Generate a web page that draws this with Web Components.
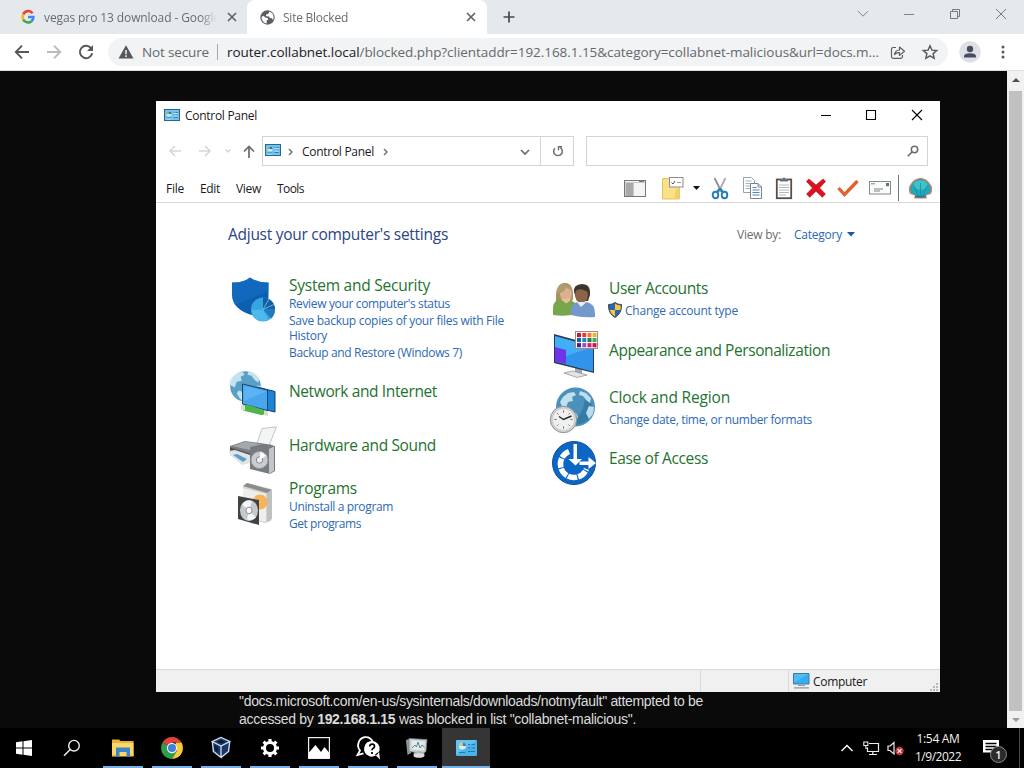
<!DOCTYPE html>
<html lang="en">
<head>
<meta charset="utf-8">
<title>Site Blocked</title>
<style>
    html, body {
        margin: 0;
        width: 1024px;
        height: 768px;
        overflow: hidden;
        background: #0a0a0a;
        font-family: "Open Sans", "Noto Sans", sans-serif;
    }

    body {
        display: flex;
        flex-direction: column;
    }
</style>
</head>
<body>
<browser-tabs>
    <browser-tab icon="google" style="width:247px"><ui-text width="176">vegas pro 13 download - Google</ui-text></browser-tab>
    <browser-tab icon="globe" active style="width:240px"><ui-text width="65">Site Blocked</ui-text></browser-tab>
</browser-tabs>
<browser-toolbar></browser-toolbar>
<browser-page>
    <p><ui-text width="464">"docs.microsoft.com/en-us/sysinternals/downloads/notmyfault" attempted to be</ui-text></p>
    <p><ui-text width="397">accessed by <b>192.168.1.15</b> was blocked in list "collabnet-malicious".</ui-text></p>
</browser-page>
<task-bar></task-bar>
<control-panel></control-panel>

<script>
const globeLand = `<path d="M7 11l5-4 6-1 2 3-4 2 1 4-5 1-2 6-4-2-2-4zM24 5l6 2 5 5-1 5-4-3-3-4-4-1zM14 25l6 2 2 4-3 6-4-4-3-5zM33 20l5 1-1 7-4 5-3-6z" fill="#d5edf6" opacity=".85"/>`

const cplArt = `<rect x=".5" y=".5" width="15" height="11" fill="#74c3ec" stroke="#256792"/><circle cx="5" cy="5" r="2.600" fill="#c5e8f7"/><path d="M5 5V2.400A2.600 2.600 0 0 1 7.600 5z" fill="#2176b4"/><path d="M5 5V2.400A2.600 2.600 0 0 0 2.400 5z" fill="#8fae4c"/><path d="M9.500 3.500h1M11.500 3.500h2.500M9.500 6h1M11.500 6h2.500M9.500 8.500h4.500M2.500 9h5" stroke="#2b83bd"/><path d="M9.500 4.500h4.500M9.500 7h4.500M2.500 10h5" stroke="#d8f0fb" stroke-width=".8"/>`

// name: [width, height, svg content]
const ikoner = {
    google: [14, 14, `<g fill="none" stroke-width="2.600"><path d="M11.600 3.200A5.500 5.500 0 0 0 2.200 4.400" stroke="#ea4335"/><path d="M2.200 4.400a5.600 5.600 0 0 0 0 5.200" stroke="#fbbc05"/><path d="M2.200 9.600a5.500 5.500 0 0 0 8.300 1.600" stroke="#34a853"/><path d="M7 7h5.400c0 1.900-.6 3.200-1.900 4.200" stroke="#4285f4"/></g>`],
    globe: [15, 15, `<circle cx="7.500" cy="7.500" r="7.200" fill="#5b5f64"/><path d="M1.600 7l1.600-1.200 2.600 2 1.900.2.600 1.600-1.700 1v2.800C4 13 1.500 10.800 1.600 7zM9 1.600v1.500L7.500 4.200 6 4.600v1.600l3 .2 1 1.700 2 .2 1 2c.9-2 .8-5.700-1-7.300z" fill="#fff"/>`],
    close: [12, 12, `<path d="M2 2l8 8M10 2l-8 8" stroke="#5d6165" stroke-width="1.600"/>`],
    plus: [14, 14, `<path d="M7 1.500v11M1.500 7h11" stroke="#45494d" stroke-width="1.700"/>`],
    down: [12, 8, `<path d="M1 1.200l5 5 5-5" fill="none" stroke="#7e8286"/>`],
    min: [12, 12, `<path d="M1 6.500h10" stroke="#7e8286"/>`],
    restore: [12, 12, `<path d="M1.500 3.500h7v7h-7zM3.500 3.500v-2h7v7h-2" fill="none" stroke="#75797d"/>`],
    x: [12, 12, `<path d="M1 1l10 10M11 1L1 11" stroke="#75797d"/>`],
    back: [16, 16, `<path d="M15 8H2M8 1.700L1.800 8 8 14.300" fill="none" stroke="#55585c" stroke-width="1.900"/>`],
    forward: [16, 16, `<path d="M1 8h13M8 1.700L14.200 8 8 14.300" fill="none" stroke="#b9bbbd" stroke-width="1.900"/>`],
    reload: [16, 16, `<path d="M13.300 4.500A6.200 6.200 0 1 0 14.200 9.300" fill="none" stroke="#55585c" stroke-width="2"/><path d="M15 1v6H9z" fill="#55585c"/>`],
    warning: [16, 14, `<path d="M8 .3L15.500 13.600H.5z" fill="#55585c"/><path d="M8 5v4.200M8 10.300v1.700" stroke="#f1f3f4" stroke-width="1.500"/>`],
    share: [16, 15, `<path d="M6 2.500H3.300Q1.500 2.500 1.500 4.300v7.200q0 1.800 1.800 1.800h7.400q1.800 0 1.800-1.800V10M4.500 9.700Q5 5.200 9.500 5V2l5 4.200-5 4.200V7.700Q6.500 7.400 4.500 9.700z" fill="none" stroke="#5b5f63" stroke-width="1.200" stroke-linejoin="round"/>`],
    star: [16, 16, `<path d="M8 1.700l1.900 4.400 4.800.4-3.600 3.100 1.100 4.700L8 11.800l-4.200 2.500 1.100-4.700L1.300 6.500l4.800-.4z" fill="none" stroke="#55595e" stroke-width="1.400"/>`],
    avatar: [22, 22, `<circle cx="11" cy="11" r="10.700" fill="#dde1e7"/><circle cx="11" cy="8" r="3.200" fill="#474e5d"/><path d="M5 16.500v-1.300q0-3 6-3t6 3v1.300z" fill="#474e5d"/>`],
    dots: [4, 16, `<g fill="#55585c"><circle cx="2" cy="3" r="1.500"/><circle cx="2" cy="8" r="1.500"/><circle cx="2" cy="13" r="1.500"/></g>`],

    cpl: [16, 12, cplArt],
    wmin: [12, 12, `<path d="M1 6.500h10" stroke="#000"/>`],
    wmax: [12, 12, `<path d="M1.500 1.500h9v9h-9z" fill="none" stroke="#000" stroke-width="1.100"/>`],
    wclose: [12, 12, `<path d="M1 1l10 10M11 1L1 11" stroke="#000" stroke-width="1.100"/>`],
    navback: [12, 12, `<path d="M12 6H1.500M6 1L1 6l5 5" fill="none" stroke="#d6d6d6" stroke-width="1.500"/>`],
    navfwd: [12, 12, `<path d="M0 6h10.500M6 1l5 5-5 5" fill="none" stroke="#d6d6d6" stroke-width="1.500"/>`],
    navdown: [6, 4, `<path d="M.5.500L3 3 5.500.500" fill="none" stroke="#cfcfcf" stroke-width="1.200"/>`],
    navup: [12, 13, `<path d="M6 13V1.500M1 6.500l5-5 5 5" fill="none" stroke="#6b6b6b" stroke-width="1.700"/>`],
    crumb: [5, 8, `<path d="M1 1l3 3-3 3" fill="none" stroke="#666" stroke-width="1.300"/>`],
    drop: [10, 7, `<path d="M1 1l4 4 4-4" fill="none" stroke="#6b6b6b" stroke-width="1.700"/>`],
    refresh: [12, 12, `<path d="M8.300 2.700A4.300 4.300 0 1 1 3 3.200" fill="none" stroke="#6c6c6c" stroke-width="1.500"/><path d="M6.500 5.300V1.700H10" fill="none" stroke="#6c6c6c" stroke-width="1.400"/>`],
    search: [12, 12, `<circle cx="7.500" cy="4.500" r="3.200" fill="none" stroke="#6d6d6d" stroke-width="1.500"/><path d="M5.200 6.900L.8 11.300" stroke="#6d6d6d" stroke-width="1.600"/>`],

    pane: [22, 17, `<rect x=".5" y=".5" width="21" height="16" fill="#f4f4f4" stroke="#777"/><rect x="1.500" y="3" width="8" height="13" fill="#a9a9a9"/><path d="M1 2.500h20M9.500 3v13" stroke="#c9c9c9"/><path d="M15 1.500h5" stroke="#777"/>`],
    folder: [22, 23, `<path d="M.5 1.500h8v2h9v18.500H.5z" fill="#fbe08a" stroke="#e5c25c"/><path d="M14 12h3.500v10H12z" fill="#f3cf69"/><rect x="7.500" y=".5" width="13.500" height="9.500" fill="#fff" stroke="#8d8d8d"/><path d="M9.500 5.500l1.500 1.500 2-3" fill="none" stroke="#555"/><path d="M15 5.500h4" stroke="#999"/>`],
    tri: [7, 4, `<path d="M0 0h7L3.500 4z" fill="#111"/>`],
    cut: [18, 23, `<path d="M3.500 1l7 14" stroke="#8b8f94" stroke-width="1.800"/><path d="M14.500 1l-7 14" stroke="#a9adb1" stroke-width="1.800"/><path d="M9 11.500l-3.500 4M9 11.500l3.500 4" stroke="#217dbb" stroke-width="2"/><ellipse cx="4.500" cy="18" rx="2.800" ry="3.300" fill="none" stroke="#217dbb" stroke-width="1.900"/><ellipse cx="13.500" cy="18" rx="2.800" ry="3.300" fill="none" stroke="#217dbb" stroke-width="1.900"/>`],
    copy: [19, 22, `<path d="M.5.500h8l3 3v12H.5z" fill="#fff" stroke="#97a2ab"/><path d="M2.500 4h6M2.500 6.500h7M2.500 9h7M2.500 11.500h7" stroke="#a3b3c0"/><path d="M7.500 6.500h7.500l3.500 3.500v11.500h-11z" fill="#fff" stroke="#79838b"/><path d="M15 6.500V10h3.500" fill="none" stroke="#79838b"/><path d="M9.500 10.500h4M9.500 13h7M9.500 15.500h7M9.500 18h7" stroke="#4a86c2" stroke-width="1.200"/>`],
    paste: [16, 22, `<rect x=".8" y="2.500" width="14.400" height="18.700" fill="#fff" stroke="#5a4e45" stroke-width="1.800"/><path d="M4 4.500V2h2.500a1.500 1.500 0 0 1 3 0H12v2.500z" fill="#62717c"/><path d="M3 8h10M3 10.500h10M3 13h10M3 15.500h10M3 18h7" stroke="#b4b9bd"/>`],
    del: [20, 20, `<path d="M3 1l7 6 7-6 2.500 2.500L13.500 10l6 6-3.200 3.300-6.300-6-6.300 6L.5 16l6-6-6-6.500z" fill="#d8121e" stroke="#b20f18" stroke-width=".6"/>`],
    check: [22, 18, `<path d="M1.500 9l6 6.500L20.500 2" fill="none" stroke="#e3602c" stroke-width="3.300"/>`],
    mail: [22, 14, `<rect x=".5" y=".5" width="21" height="12.500" fill="#fafbfb" stroke="#85898d"/><path d="M2 2.800h4M5 8h9M5 10h6" stroke="#7d8387"/><rect x="17" y="2" width="3" height="3.200" fill="#6a6f73"/>`],
    shell: [25, 22, `<path d="M6 21.500l1-3-5-1.500Q-1 11 3.500 6 6 1.500 12.500.7 19 1.500 21.500 6 26 11 23 17l-5 1.500 1 3z" fill="#c98362"/><path d="M7 20l.5-2L3 15.500Q1 10.500 4.500 6.500 8 2.500 12.500 1.900 17 2.500 20.500 6.500 24 10.500 22 15.500L17.500 18l.5 2z" fill="#20a9bb"/><ellipse cx="12.500" cy="8" rx="7" ry="4.500" fill="#51cbd3" opacity=".7"/><path d="M12.500 18V6M9.500 17.500L6 8.500M15.500 17.500L19 8.500" stroke="#148aa0" fill="none" stroke-width=".7"/><path d="M7 20q5.500 1.500 11 0l-.5-1.500h-10z" fill="#1e7e97"/>`],

    system: [48, 48, `<path d="M3 7.500Q14 8 21 2.500 29 8 39.500 7.500V21q0 12-15 19.500Q3 35 3 19z" fill="#0e5fb0"/><path d="M3 7.500Q14 8 21 2.500 29 8 39.500 7.500V16L6 30Q3 25 3 19z" fill="#146fc6" opacity=".6"/><circle cx="34" cy="34.500" r="12" fill="#35a6e0"/><path d="M34 34.500V22.500A12 12 0 0 1 46 34.500z" fill="#165f9f"/><path d="M34 34.500l12 0a12 12 0 0 1-4 9z" fill="#2379bb"/><path d="M34 34.500L40 24M34 34.500l11-5" stroke="#5db9e8"/><path d="M22.500 35a12 12 0 0 0 17 10L34 34.500z" fill="#55bfee" opacity=".8"/>`],
    network: [48, 48, `<circle cx="16.500" cy="17.500" r="15.300" fill="#5a9fc6"/><g transform="translate(-4 -3)scale(.98)">${globeLand}</g><path d="M28 18l18 4.500V43l-13-3z" fill="#1d83d2" stroke="#13406c"/><path d="M13.500 15l25 6V41.500l-25-6.500z" fill="#48a6ee" stroke="#17466f"/><path d="M15 17l22 5.500L15 32z" fill="#6ec0f8" opacity=".5"/><path d="M14 36.500l5-.5 17 5.500v4l-4 .5L14 41.500z" fill="#4eb548"/><path d="M12 36l4 1v4.500l-4-1zM35 41.500l4 1v4.500l-4-1z" fill="#d2e0cc"/>`],
    hardware: [48, 48, `<path d="M28 17L33 2.500 47.500.800 40 20z" fill="#f3f4f5" stroke="#b5b8ba" stroke-width=".8"/><path d="M1 20l15-5 28 4-9 12-13 2L1 25z" fill="#797c80"/><path d="M3 20l14-4.500 22 4-12 6z" fill="#a4a8ab"/><path d="M1 21.500l21 6.500v6L1 28z" fill="#4c4f52"/><path d="M0 25l6-1 15 5v8l-8 2L1 29z" fill="#dfe4e7"/><path d="M4 29l4-1 10 5-4 3z" fill="#5d9fc4"/><path d="M21 21l13-3 12 2v25l-5 3-20-5z" fill="#777b7f"/><path d="M40 23l5-2.500v24L40 48z" fill="#c3c6c9"/><circle cx="30.500" cy="34" r="8.500" fill="#c9cdd0" stroke="#94989b"/><circle cx="30.500" cy="34" r="3.200" fill="#eceeef" stroke="#85898c"/><path d="M30.500 34l1-8.500 6 4z" fill="#fff"/>`],
    programs: [48, 48, `<path d="M14 7l4-4 25 6-1 4v28l-6 2-22-5z" fill="#d3d3d0"/><path d="M14 6l4-3 25 7-5 3z" fill="#8c8d8b"/><path d="M14 8l23 6v28l-23-5z" fill="#eeeeeb"/><path d="M38 13l5-2v28l-5 3z" fill="#bfc1c0"/><circle cx="31" cy="22" r="7.500" fill="#f5b45a"/><path d="M25 17l6 5-5 6z" fill="#f8cc86"/><path d="M9 16l21 4v25L9 39z" fill="#404245"/><ellipse cx="20" cy="30.500" rx="9" ry="10.500" fill="#c6cacc"/><path d="M20 30.500l-7-6q5-6 10-3zM20 30.500l7 7q-5 4-9 2z" fill="#f4f5f5"/><ellipse cx="20" cy="30.500" rx="3" ry="3.300" fill="#fff" stroke="#8a8e91"/>`],
    users: [48, 48, `<path d="M6 24Q5 7 14 6q10-1 9 16l-2 4H8z" fill="#a9915f"/><ellipse cx="16" cy="17" rx="6" ry="7.500" fill="#d9b18f"/><path d="M6.500 17Q6 8 14 7.500q8 0 8.500 6-4-1-6.500-3-2 5-6 5.500z" fill="#b39c6c"/><path d="M3 38V31q0-7 7-9l6 3 6-1 5 3v10q-12 3-24 1z" fill="#78a64a"/><path d="M11 22.500l5 4 4-2.500v-3z" fill="#e7c099"/><path d="M24 15Q23 7.500 32 7q9 0 8 11l-2 6H27z" fill="#463a35"/><ellipse cx="31.500" cy="18" rx="6.300" ry="8" fill="#8c6448"/><path d="M25 14q5-4 13 1V11q-6-4-12-1z" fill="#3a3330"/><path d="M21 38V34q0-7 6-9l5 4 4-4q9 1 9 12v3q-13 1-24-2z" fill="#7298cc"/><path d="M27 25l4 5 5-5z" fill="#ebeef1"/>`],
    appearance: [48, 48, `<path d="M25 37l7 2v5h-7z" fill="#a2a8ad"/><path d="M14 43l9-2 14 4-10 2.500z" fill="#e1e4e7" stroke="#868c91" stroke-width=".7"/><path d="M4 4l40 11v28L4 33z" fill="#263c5c"/><path d="M5 6l38 10.500v25L5 31.500z" fill="#42aef6"/><path d="M5 17l11 3v14L5 31.500z" fill="#6f34e8"/><path d="M16 34V26L43 17v24.500z" fill="#2482e4" opacity=".6"/><rect x="25.500" y="1.500" width="22" height="17" fill="#fff" stroke="#a0888a"/><g stroke-width="4.200" fill="none"><path d="M27 5h4" stroke="#b8212f"/><path d="M32.300 5h4" stroke="#e43c36"/><path d="M37.500 5h4" stroke="#f07840"/><path d="M42.500 5h4" stroke="#e9b632"/><path d="M27 10h4" stroke="#1564a9"/><path d="M32.300 10h4" stroke="#168bcb"/><path d="M37.500 10h4" stroke="#327b32"/><path d="M42.500 10h4" stroke="#3cac5e"/><path d="M27 15.200h4" stroke="#4a1c92"/><path d="M32.300 15.200h4" stroke="#9254ba"/><path d="M37.500 15.200h4" stroke="#c9217b"/><path d="M42.500 15.200h4" stroke="#cc1645"/></g>`],
    clock: [48, 48, `<circle cx="25.500" cy="21" r="19.500" fill="#4a91bb"/><path d="M20 39q15 2 23-12-1-15-10-22 6 18-13 34z" fill="#287099" opacity=".6"/><g transform="translate(6 0)">${globeLand}</g><circle cx="13.500" cy="33.500" r="13.200" fill="#cfd2d2" stroke="#8f9292"/><circle cx="13.500" cy="33.500" r="10.500" fill="#f0f0ee"/><path d="M13.500 24.500v2M13.500 40.500v2M4.500 33.500h2M20.500 33.500h2M7.200 27.200l1.200 1.200M19.800 27.200l-1.200 1.200M7.200 39.800l1.200-1.200M19.800 39.800l-1.200-1.200" stroke="#666"/><path d="M9 30.500l4.500 3 8-3.500" fill="none" stroke="#262626" stroke-width="1.400"/>`],
    ease: [48, 48, `<circle cx="24" cy="24" r="21.500" fill="#0d66c6" stroke="#0a4f98"/><path d="M19 12.500A13.500 13.500 0 1 0 36.500 30" fill="none" stroke="#fff" stroke-width="5.500" stroke-dasharray="9.200 1.100"/><path d="M23.500 5h3.500v15h5L25.500 26.500l-7-6.500h5z" fill="#fff"/><path d="M29.500 22.500h9V18l7.500 6-7.500 6v-4h-9z" fill="#fff"/>`],
    uac: [14, 16, `<path d="M7 .5Q10 2.800 13.500 2.500 14 11.500 7 15.500 0 11.500.5 2.500 4 2.800 7 .5z" fill="#2668ad" stroke="#424a53"/><path d="M7 1.500Q9.500 3.500 12.700 3.400 12.900 6 12.300 8H7zM7 8v6.500Q3 12 1.700 8z" fill="#fac440"/>`],
    bluetri: [8, 5, `<path d="M0 0h8L4 4.500z" fill="#1d56ad"/>`],
    computer: [17, 16, `<path d="M.5.500h15.500v10.500H.5z" fill="#35adf0" stroke="#3d7ba4"/><path d="M1 1h14L1 10z" fill="#65c4f5" opacity=".6"/><path d="M5 12.500h7M1 14.800h15" stroke="#8b999f" stroke-width="1.200"/>`],
    grip: [9, 9, `<path d="M6 0h2v2H6zM3 3h2v2H3zM6 3h2v2H6zM0 6h2v2H0zM3 6h2v2H3zM6 6h2v2H6z" fill="#b9b9b9"/>`],

    start: [16, 16, `<path d="M0 2.300L6.500 1.300V7.500H0zM7.500 1.200L16 0v7.500H7.500zM0 8.500h6.500v6.200L0 13.700zM7.500 8.500H16V16l-8.500-1.200z" fill="#fff"/>`],
    find: [18, 18, `<circle cx="11" cy="6.700" r="5.300" fill="none" stroke="#eee" stroke-width="1.400"/><path d="M7.200 10.500L1 16.700" stroke="#eee" stroke-width="1.500"/>`],
    explorer: [22, 20, `<path d="M0 1.500h7l1.500 1.500H21.500v15H0z" fill="#e9b338"/><path d="M0 5h21.500v13.500H0z" fill="#fbd668"/><path d="M4 9.500h14v9h-3.500V14h-7v4.500H4z" fill="#3b86ca"/><path d="M0 18h4v-1.500H0zM18 18h3.500v-1.500H18z" fill="#edbe4a"/>`],
    chrome: [22, 22, `<path d="M11 11L1.500 5.500A11 11 0 0 1 20.500 5.500H11z" fill="#df4537"/><path d="M11 11L1.500 5.500A11 11 0 0 0 11 22l5-8.500z" fill="#2c9f4b"/><path d="M20.500 5.500A11 11 0 0 1 11 22l5-8.500-1.500-8z" fill="#fbca38"/><circle cx="11" cy="11" r="5.200" fill="#f4f4f4"/><circle cx="11" cy="11" r="4" fill="#3f80dc"/>`],
    vbox: [20, 23, `<path d="M10 .5L19.500 5 18.500 16 10 22.500 1.500 16 .5 5z" fill="#1b3765"/><path d="M10 1.500L18.700 5.500 10 10 1.300 5.500zM1.300 5.500L2.500 15.500 10 21.500V10M18.700 5.500L17.500 15.500 10 21.500" fill="none" stroke="#d5dfec" stroke-width="1.300"/><path d="M10 4l4 1.700-4 1.800-4-1.800z" fill="#0a1730"/><path d="M3 9l4 2.500v5l-3-2.500z" fill="#0b1c3c"/>`],
    gear: [20, 20, `<circle cx="10" cy="10" r="5.500" fill="none" stroke="#fff" stroke-width="3"/><path d="M10 1v3M10 16v3M1 10h3M16 10h3M3.600 3.600l2.200 2.200M14.200 14.200l2.200 2.200M3.600 16.400l2.200-2.200M14.200 5.800l2.200-2.200" stroke="#fff" stroke-width="3.200"/>`],
    photos: [22, 22, `<rect x=".6" y=".6" width="20.800" height="20.800" fill="#000" stroke="#eee" stroke-width="1.200"/><path d="M1 15.500L7.500 8l5.500 7 3.500-5L21 15.500V21H1z" fill="#fff"/>`],
    help: [25, 24, `<path d="M8.500 1.200A8.300 8.300 0 0 0 4 14.500L1.500 19l6-1.700M8.500 1.200q6-.8 8.500 5" fill="none" stroke="#fff" stroke-width="1.800"/><path d="M16 5a7.800 7.800 0 1 1-3.500 14.800A7.800 7.800 0 0 1 16 5zM19 18.500l5 5-1-8z" fill="#fff"/><path d="M13.700 10.500q0-2.300 2.400-2.300t2.400 2.100q0 1.400-1.300 2t-1.200 2M16 16v2" fill="none" stroke="#000" stroke-width="1.700"/>`],
    taskmgr: [24, 23, `<path d="M1 4l5-1.500V17L2.500 19z" fill="#93999b"/><path d="M4 2.500L22 3.500l-1 12-3 2-14-2z" fill="#c9cfd1" stroke="#737b7e" stroke-width=".7"/><path d="M6.500 4.500l13.500 1-1 9-12.500-1z" fill="#e4ebec"/><path d="M7 12l3-3 1.500 2L13 6l2 6 2-3 2.500 2" fill="none" stroke="#548a92"/><ellipse cx="14" cy="18" rx="5.500" ry="2.800" fill="#aeb3b5"/><ellipse cx="14" cy="19.500" rx="5.500" ry="2.300" fill="#dcdfe0"/>`],
    cpltask: [21, 16, `<rect width="21" height="16" rx="1" fill="#4db2e8"/><path d="M0 0h21L0 15z" fill="#78cdf4" opacity=".6"/><circle cx="6.500" cy="6" r="3.600" fill="#d7edf0"/><path d="M6.500 6V2.400A3.600 3.600 0 0 1 10.100 6z" fill="#2a86bd"/><path d="M6.500 6H3q0-3 3.500-3.600z" fill="#d6c775"/><path d="M12 4.500h2M15.500 4.500H19M12 8h2M15.500 8H19M12 11.500h7M3 12.500h6" stroke="#1e7ab7" stroke-width="1.200"/>`],
    trayup: [14, 8, `<path d="M1.500 7L7 1.500 12.500 7" fill="none" stroke="#fff" stroke-width="1.400"/>`],
    traynet: [17, 15, `<path d="M6 2.500h9.500v8H4.500v-4M9.800 10.500v3M6 13.500h8" fill="none" stroke="#eee" stroke-width="1.200"/><path d="M.8 1h4v3.500h-4zM2.800 4.500v2.800H5" fill="none" stroke="#eee" stroke-width="1.100"/>`],
    trayvol: [18, 15, `<path d="M1 5h2L7 1.500v11.500L3 9.500H1z" fill="none" stroke="#eee" stroke-width="1.200"/><circle cx="12.500" cy="10" r="4.200" fill="#cc3538"/><path d="M10.600 8.100l3.800 3.800M14.400 8.100l-3.800 3.800" stroke="#fff" stroke-width="1.200"/>`],
    notify: [16, 16, `<path d="M0 0h16v12.500h-6l-2 2.500v-2.500H0z" fill="#fff"/><path d="M2.500 3.500h11M2.500 6.500h11M2.500 9.500h7" stroke="#000" stroke-width="1.300"/>`]
}

class UiIcon extends HTMLElement {

    constructor() {
        super();
        this.attachShadow({ mode: 'open' });
    }

    connectedCallback() {
        const [w, h, innhold] = ikoner[this.getAttribute('name')]
        this.shadowRoot.innerHTML = `
        <style>
            :host {
                display: block;
                flex: none;
                width: ${w}px;
                height: ${h}px;
            }
            svg { display: block; overflow: visible; }
        </style>
        <svg width="${w}" height="${h}" viewBox="0 0 ${w} ${h}">${innhold}</svg>
        `
    }
}

// One line of text, tracked so that it fills the given width
class UiText extends HTMLElement {

    constructor() {
        super();
        this.attachShadow({ mode: 'open' });
        this.shadowRoot.innerHTML = `
        <style>
            :host {
                display: inline-block;
                flex: none;
                white-space: nowrap;
            }
        </style>
        <slot></slot>
        `
    }

    connectedCallback() {
        const bredde = Number(this.getAttribute('width'))
        if (!bredde) return
        const ledig = bredde - this.getBoundingClientRect().width
        this.style.letterSpacing = (ledig / this.textContent.length) + 'px'
    }
}

class BrowserTab extends HTMLElement {

    constructor() {
        super();
        this.attachShadow({ mode: 'open' });
    }

    connectedCallback() {
        this.shadowRoot.innerHTML = `
        <style>
            :host {
                box-sizing: border-box;
                display: flex;
                align-items: center;
                height: 34px;
                padding: 0 9px 0 21px;
                color: #686c70;
                font-size: 12px;
            }
            :host([active]) {
                background: #fff;
                border-radius: 8px 8px 0 0;
                padding: 0 10px 0 13px;
            }
            #tekst {
                flex: 1;
                margin: 0 9px 0 9px;
                overflow: hidden;
                -webkit-mask-image: linear-gradient(90deg, #000 90%, transparent);
                mask-image: linear-gradient(90deg, #000 90%, transparent);
            }
            :host([active]) #tekst { margin-left: 8px; }
        </style>
        <ui-icon name="${this.getAttribute('icon')}"></ui-icon>
        <div id="tekst"><slot></slot></div>
        <ui-icon name="close"></ui-icon>
        `
    }
}

class BrowserTabs extends HTMLElement {

    constructor() {
        super();
        this.attachShadow({ mode: 'open' });
    }

    connectedCallback() {
        this.shadowRoot.innerHTML = `
        <style>
            :host {
                display: flex;
                align-items: center;
                height: 34px;
                background: #e6e9ec;
            }
            #ny { margin-left: 15px; }
            #knapper {
                display: flex;
                margin-left: auto;
                margin-bottom: 6px;
            }
            #knapper div {
                width: 46px;
                display: flex;
                justify-content: center;
                align-items: center;
            }
        </style>
        <slot></slot>
        <ui-icon id="ny" name="plus"></ui-icon>
        <div id="knapper">
            <div><ui-icon name="down"></ui-icon></div>
            <div><ui-icon name="min"></ui-icon></div>
            <div><ui-icon name="restore"></ui-icon></div>
            <div><ui-icon name="x"></ui-icon></div>
        </div>
        `
    }
}

class BrowserToolbar extends HTMLElement {

    constructor() {
        super();
        this.attachShadow({ mode: 'open' });
    }

    connectedCallback() {
        this.shadowRoot.innerHTML = `
        <style>
            :host {
                box-sizing: border-box;
                display: flex;
                align-items: center;
                height: 37px;
                padding: 0 18px 0 14px;
                background: #fff;
                border-bottom: 1px solid #dcdedf;
                font-size: 13.500px;
                color: #66696d;
            }
            #nav { display: flex; gap: 16px; }
            #felt {
                box-sizing: border-box;
                display: flex;
                align-items: center;
                width: 840px;
                height: 28px;
                margin: 0 11px 0 14px;
                padding: 0 10px;
                border-radius: 14px;
                background: #f1f3f4;
            }
            #felt > :first-child { margin-right: 8px; }
            #strek {
                width: 1px;
                height: 16px;
                background: #a5a8ab;
                margin: 0 9px 0 8px;
            }
            #strek + ui-text b { font-weight: normal; color: #202124; }
            #del { margin: 0 16px 0 11px; }
            #meny { margin-left: 20px; }
        </style>
        <div id="nav">
            <ui-icon name="back"></ui-icon>
            <ui-icon name="forward"></ui-icon>
            <ui-icon name="reload"></ui-icon>
        </div>
        <div id="felt">
            <ui-icon name="warning"></ui-icon>
            <ui-text width="67">Not secure</ui-text>
            <div id="strek"></div>
            <ui-text width="652"><b>router.collabnet.local</b>/blocked.php?clientaddr=192.168.1.15&amp;category=collabnet-malicious&amp;url=docs.m...</ui-text>
            <ui-icon id="del" name="share"></ui-icon>
            <ui-icon name="star"></ui-icon>
        </div>
        <ui-icon name="avatar"></ui-icon>
        <ui-icon id="meny" name="dots"></ui-icon>
        `
    }
}

class BrowserPage extends HTMLElement {

    constructor() {
        super();
        this.attachShadow({ mode: 'open' });
    }

    connectedCallback() {
        this.shadowRoot.innerHTML = `
        <style>
            :host {
                display: flex;
                height: 657px;
                background: #0a0a0a;
                color: #dcdcdc;
                font: 14px/18px "Liberation Sans", Arial, sans-serif;
            }
            #innhold {
                flex: 1;
                display: flex;
                flex-direction: column;
                justify-content: flex-end;
                padding-left: 239px;
            }
            ::slotted(p) { margin: 0; height: 18px; }
            #rulle {
                display: flex;
                flex-direction: column;
                align-items: center;
                justify-content: space-between;
                width: 17px;
                background: #f1f1f1;
            }
            #rulle i {
                height: 17px;
                width: 17px;
                display: flex;
                justify-content: center;
                align-items: center;
            }
            #tommel {
                width: 13px;
                flex: 1;
                margin: 3px 0 0;
                background: #c1c1c1;
            }
        </style>
        <div id="innhold"><slot></slot></div>
        <div id="rulle">
            <i><svg width="8" height="4"><path d="M4 0l4 4H0z" fill="#505050"/></svg></i>
            <div id="tommel"></div>
            <i><svg width="8" height="4"><path d="M0 0h8L4 4z" fill="#9a9a9a"/></svg></i>
        </div>
        `
    }
}

class TaskButton extends HTMLElement {

    constructor() {
        super();
        this.attachShadow({ mode: 'open' });
    }

    connectedCallback() {
        this.shadowRoot.innerHTML = `
        <style>
            :host {
                display: flex;
                flex-direction: column;
                align-items: center;
                width: 48px;
                height: 40px;
            }
            :host([active]) { background: #353535; }
            #ikon {
                height: 38px;
                padding-top: 1px;
                box-sizing: border-box;
                display: flex;
                align-items: center;
            }
            #linje { height: 2px; width: 40px; }
            :host([open]) #linje { background: #76b0e6; }
            :host([active]) #linje { width: 48px; }
        </style>
        <div id="ikon"><ui-icon name="${this.getAttribute('icon')}"></ui-icon></div>
        <div id="linje"></div>
        `
    }
}

class TaskBar extends HTMLElement {

    constructor() {
        super();
        this.attachShadow({ mode: 'open' });
    }

    connectedCallback() {
        const apne = ['explorer', 'chrome', 'vbox', 'gear', 'photos', 'help', 'taskmgr']
        this.shadowRoot.innerHTML = `
        <style>
            :host {
                display: flex;
                height: 40px;
                background: #000;
                color: #f2f2f2;
                font-size: 12px;
            }
            #apper { display: flex; gap: 1px; margin-left: 3px; }
            #status {
                display: flex;
                align-items: center;
                margin-left: auto;
            }
            #tid {
                display: flex;
                flex-direction: column;
                align-items: center;
                line-height: 18px;
                width: 48px;
                margin: 0 1px 0 9px;
            }
            #varsel {
                position: relative;
                margin-left: 20px;
            }
            #antall {
                position: absolute;
                left: 7px;
                top: 6px;
                width: 15px;
                height: 15px;
                border: 1px solid #8a8a8a;
                border-radius: 50%;
                background: #2b2b2b;
                text-align: center;
                line-height: 15px;
                font-size: 11px;
                font-weight: 600;
            }
            #kant {
                width: 1px;
                height: 40px;
                background: #4a4a4a;
                margin: 0 4px 0 20px;
            }
        </style>
        <task-button icon="start"></task-button>
        <task-button icon="find"></task-button>
        <div id="apper">
            ${apne.map(navn => `<task-button icon="${navn}" open></task-button>`).join('')}
            <task-button icon="cpltask" open active></task-button>
        </div>
        <div id="status">
            <ui-icon name="trayup"></ui-icon>
            <ui-icon name="traynet" style="margin-left:9px"></ui-icon>
            <ui-icon name="trayvol" style="margin-left:7px"></ui-icon>
            <div id="tid">
                <ui-text width="43">1:54 AM</ui-text>
                <ui-text width="46">1/9/2022</ui-text>
            </div>
            <div id="varsel"><ui-icon name="notify"></ui-icon><div id="antall">1</div></div>
            <div id="kant"></div>
        </div>
        `
    }
}

class PanelCategory extends HTMLElement {

    constructor() {
        super();
        this.attachShadow({ mode: 'open' });
    }

    connectedCallback() {
        this.shadowRoot.innerHTML = `
        <style>
            :host {
                display: flex;
                align-items: flex-start;
                gap: 12px;
                color: #2d69b6;
                font-size: 12px;
                line-height: 15px;
            }
            ui-icon { margin-top: var(--ikon-topp, 0px); }
            #tekst { padding-top: var(--tekst-topp, 0px); }
            #tittel {
                height: 20px;
                margin-bottom: var(--avstand, 0px);
                line-height: 20px;
                font-size: 15.500px;
                color: #24732f;
            }
            ::slotted(div) {
                display: flex;
                padding-top: 1px;
                margin-bottom: 1px;
            }
        </style>
        <ui-icon name="${this.getAttribute('icon')}"></ui-icon>
        <div id="tekst">
            <div id="tittel"><slot name="tittel"></slot></div>
            <slot></slot>
        </div>
        `
    }
}

class ControlPanel extends HTMLElement {

    constructor() {
        super();
        this.attachShadow({ mode: 'open' });
    }

    connectedCallback() {
        this.shadowRoot.innerHTML = `
        <style>
            :host {
                position: absolute;
                left: 156px;
                top: 101px;
                width: 784px;
                height: 591px;
                display: flex;
                flex-direction: column;
                background: #fff;
                color: #1a1a1a;
                font-size: 12px;
                line-height: 16px;
            }
            .rad { display: flex; align-items: center; }
            #tittellinje { height: 28px; padding-left: 8px; gap: 5px; }
            #tittellinje ui-text { padding-top: 2px; }
            #knapper { display: flex; margin-left: auto; }
            #knapper div {
                width: 46px;
                display: flex;
                justify-content: center;
            }
            #adresserad {
                height: 42px;
                margin-top: 1px;
                padding: 0 12px 0 13px;
            }
            .boks {
                box-sizing: border-box;
                display: flex;
                align-items: center;
                height: 30px;
                border: 1px solid #d4d4d4;
            }
            #adresse { width: 312px; margin-left: 7px; padding-left: 2px; }
            #adresse ui-text { padding-top: 1px; }
            #oppdater {
                width: 32px;
                height: 28px;
                border-left: 1px solid #d4d4d4;
                display: flex;
                align-items: center;
                justify-content: center;
            }
            #sok {
                width: 342px;
                margin-left: 12px;
                padding-right: 8px;
                justify-content: flex-end;
            }
            #menyrad {
                box-sizing: border-box;
                height: 31px;
                padding: 2px 7px 0 10px;
                border-bottom: 1px solid #d9d9d9;
            }
            #menyrad > ui-text { margin-right: 16px; padding-top: 1px; }
            #verktoy { display: flex; align-items: center; margin-left: auto; }
            #deler { width: 1px; height: 26px; background: #777; margin: 0 9px 0 7px; }
            #innhold { flex: 1; padding: 20px 85px 0 72px; }
            #topp {
                display: flex;
                align-items: center;
                height: 22px;
                color: #6c6c6c;
            }
            #topp ui-text { padding-top: 2px; }
            #topp #overskrift {
                font-size: 15.500px;
                color: #2b4484;
                margin-right: auto;
                padding-top: 0;
            }
            #kategorier {
                display: grid;
                grid-template-columns: 322px auto;
                padding-top: 30px;
            }
            .kolonne { display: grid; align-content: start; }
            #venstre { grid-template-rows: 94px 57px 52px 60px; padding-left: 1px; }
            #hoyre { grid-template-rows: 55px 56px 53px 60px; }
            #hoyre panel-category { gap: 11px; }
            #statuslinje {
                box-sizing: border-box;
                display: flex;
                height: 23px;
                background: #f0f0f0;
                border-top: 1px solid #dadada;
            }
            #statuslinje div {
                box-sizing: border-box;
                display: flex;
                align-items: center;
                border-right: 1px solid #dadada;
            }
            #statuslinje #maskin { flex: 1; border: 0; padding-left: 4px; gap: 3px; }
            #statuslinje #maskin ui-text { padding-top: 2px; }
            #grep { margin: 13px 1px 0 auto; align-self: flex-start; }
        </style>
        <div id="tittellinje" class="rad">
            <ui-icon name="cpl"></ui-icon>
            <ui-text width="72">Control Panel</ui-text>
            <div id="knapper">
                <div><ui-icon name="wmin" style="margin-left:1px"></ui-icon></div>
                <div><ui-icon name="wmax"></ui-icon></div>
                <div><ui-icon name="wclose"></ui-icon></div>
            </div>
        </div>
        <div id="adresserad" class="rad">
            <ui-icon name="navback"></ui-icon>
            <ui-icon name="navfwd" style="margin-left:18px"></ui-icon>
            <ui-icon name="navdown" style="margin-left:14px"></ui-icon>
            <ui-icon name="navup" style="margin-left:12px"></ui-icon>
            <div id="adresse" class="boks">
                <ui-icon name="cpl" style="margin-bottom:2px"></ui-icon>
                <ui-icon name="crumb" style="margin:2px 9px 0 7px"></ui-icon>
                <ui-text width="72">Control Panel</ui-text>
                <ui-icon name="crumb" style="margin:2px auto 0 9px"></ui-icon>
                <ui-icon name="drop" style="margin:3px 10px 0 0"></ui-icon>
                <div id="oppdater"><ui-icon name="refresh" style="margin-left:1px"></ui-icon></div>
            </div>
            <div id="sok" class="boks"><ui-icon name="search"></ui-icon></div>
        </div>
        <div id="menyrad" class="rad">
            <ui-text width="18">File</ui-text>
            <ui-text width="20">Edit</ui-text>
            <ui-text width="25">View</ui-text>
            <ui-text width="27">Tools</ui-text>
            <div id="verktoy">
                <ui-icon name="pane"></ui-icon>
                <ui-icon name="folder" style="margin-left:16px"></ui-icon>
                <ui-icon name="tri" style="margin-left:9px"></ui-icon>
                <ui-icon name="cut" style="margin-left:11px"></ui-icon>
                <ui-icon name="copy" style="margin-left:14px"></ui-icon>
                <ui-icon name="paste" style="margin-left:14px"></ui-icon>
                <ui-icon name="del" style="margin-left:14px"></ui-icon>
                <ui-icon name="check" style="margin-left:11px"></ui-icon>
                <ui-icon name="mail" style="margin-left:10px"></ui-icon>
                <div id="deler"></div>
                <ui-icon name="shell"></ui-icon>
            </div>
        </div>
        <div id="innhold">
            <div id="topp">
                <ui-text id="overskrift" width="220">Adjust your computer's settings</ui-text>
                <ui-text width="44">View by:</ui-text>
                <ui-text width="48" style="margin:0 5px 0 13px;color:#2d69b6">Category</ui-text>
                <ui-icon name="bluetri"></ui-icon>
            </div>
            <div id="kategorier">
                <div id="venstre" class="kolonne">
                    <panel-category icon="system">
                        <ui-text slot="tittel" width="141">System and Security</ui-text>
                        <div><ui-text width="161">Review your computer's status</ui-text></div>
                        <div style="flex-direction:column;align-items:flex-start">
                            <ui-text width="215">Save backup copies of your files with File</ui-text>
                            <ui-text width="38">History</ui-text>
                        </div>
                        <div><ui-text width="173">Backup and Restore (Windows 7)</ui-text></div>
                    </panel-category>
                    <panel-category icon="network" style="--tekst-topp:12px">
                        <ui-text slot="tittel" width="148">Network and Internet</ui-text>
                    </panel-category>
                    <panel-category icon="hardware" style="--tekst-topp:9px">
                        <ui-text slot="tittel" width="147">Hardware and Sound</ui-text>
                    </panel-category>
                    <panel-category icon="programs" style="--ikon-topp:2px">
                        <ui-text slot="tittel" width="68">Programs</ui-text>
                        <div><ui-text width="104">Uninstall a program</ui-text></div>
                        <div><ui-text width="72">Get programs</ui-text></div>
                    </panel-category>
                </div>
                <div id="hoyre" class="kolonne">
                    <panel-category icon="users" style="--ikon-topp:2px;--tekst-topp:3px;--avstand:4px">
                        <ui-text slot="tittel" width="99">User Accounts</ui-text>
                        <div><ui-icon name="uac" style="margin:-1px 3px 0 -1px"></ui-icon><ui-text width="113">Change account type</ui-text></div>
                    </panel-category>
                    <panel-category icon="appearance" style="--tekst-topp:10px">
                        <ui-text slot="tittel" width="221">Appearance and Personalization</ui-text>
                    </panel-category>
                    <panel-category icon="clock" style="--tekst-topp:1px;--avstand:4px">
                        <ui-text slot="tittel" width="121">Clock and Region</ui-text>
                        <div><ui-text width="203">Change date, time, or number formats</ui-text></div>
                    </panel-category>
                    <panel-category icon="ease" style="--tekst-topp:9px">
                        <ui-text slot="tittel" width="99">Ease of Access</ui-text>
                    </panel-category>
                </div>
            </div>
        </div>
        <div id="statuslinje">
            <div style="width:545px"></div>
            <div style="width:88px"></div>
            <div id="maskin">
                <ui-icon name="computer"></ui-icon>
                <ui-text width="54">Computer</ui-text>
                <ui-icon id="grep" name="grip"></ui-icon>
            </div>
        </div>
        `
    }
}

customElements.define('ui-icon', UiIcon);
customElements.define('browser-tab', BrowserTab);
customElements.define('browser-tabs', BrowserTabs);
customElements.define('browser-toolbar', BrowserToolbar);
customElements.define('browser-page', BrowserPage);
customElements.define('task-button', TaskButton);
customElements.define('task-bar', TaskBar);
customElements.define('panel-category', PanelCategory);
customElements.define('control-panel', ControlPanel);
// last, since it measures text with the fonts its parents have set
customElements.define('ui-text', UiText);
</script>
</body>
</html>
